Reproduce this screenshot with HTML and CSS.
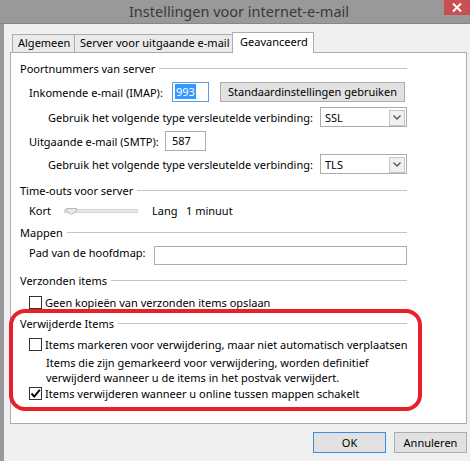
FILE: index.html
```html
<!DOCTYPE html>
<html>
<head>
<meta charset="utf-8">
<link rel="stylesheet" href="styles.css">
</head>
<body>
<div class="window">
  <div class="titlebar">
    <div class="title">Instellingen voor internet-e-mail</div>
    <div class="close">
      <svg width="10" height="9" viewBox="0 0 10 9"><path d="M1 0.5 L9 8.5 M9 0.5 L1 8.5" stroke="#fff" stroke-width="2"/></svg>
    </div>
  </div>
  <div class="frame">
    <div class="tabs">
      <div class="tab t1">Algemeen</div>
      <div class="tab t2">Server voor uitgaande e-mail</div>
      <div class="tab t3 active">Geavanceerd</div>
    </div>
    <div class="panel">
      <div class="group-head"><span>Poortnummers van server</span></div>
      <div class="row ind1 m4">
        <span class="lbl w-imap">Inkomende e-mail (IMAP):</span>
        <div class="input focus w-imapin"><span class="seltext">993</span></div>
        <button class="btn std">Standaardinstellingen gebruiken</button>
      </div>
      <div class="row ind2 m5">
        <span class="lbl w-enc">Gebruik het volgende type versleutelde verbinding:</span>
        <div class="select"><span class="val">SSL</span><span class="drop"><svg width="8" height="5" viewBox="0 0 8 5"><path d="M0.5 0.5 L4 4 L7.5 0.5" fill="none" stroke="#555" stroke-width="1.4"/></svg></span></div>
      </div>
      <div class="row ind1 m4">
        <span class="lbl w-smtp">Uitgaande e-mail (SMTP):</span>
        <div class="input w-smtpin">587</div>
      </div>
      <div class="row ind2 m3">
        <span class="lbl w-enc">Gebruik het volgende type versleutelde verbinding:</span>
        <div class="select"><span class="val">TLS</span><span class="drop"><svg width="8" height="5" viewBox="0 0 8 5"><path d="M0.5 0.5 L4 4 L7.5 0.5" fill="none" stroke="#555" stroke-width="1.4"/></svg></span></div>
      </div>

      <div class="group-head m6"><span>Time-outs voor server</span></div>
      <div class="row ind1">
        <span class="lbl w-kort">Kort</span>
        <div class="slider">
          <div class="track"></div>
          <svg class="thumb" width="11" height="7" viewBox="0 0 11 7"><path d="M0.5 0.5 H10.5 V3 L5.5 6.5 L0.5 3 Z" fill="#ececec" stroke="#b5b5b5"/></svg>
        </div>
        <span class="lbl w-lang">Lang</span>
        <span class="lbl">1 minuut</span>
      </div>

      <div class="group-head m2"><span>Mappen</span></div>
      <div class="row ind1 m3">
        <span class="lbl w-pad up">Pad van de hoofdmap:</span>
        <div class="input w-padin"></div>
      </div>

      <div class="group-head m5"><span>Verzonden items</span></div>
      <div class="row ind1 m2">
        <span class="cb"></span><span class="cblbl">Geen kopieën van verzonden items opslaan</span>
      </div>

      <div class="group-head m1"><span>Verwijderde Items</span></div>
      <div class="row ind1 m1">
        <span class="cb"></span><span class="cblbl">Items markeren voor verwijdering, maar niet automatisch verplaatsen</span>
      </div>
      <div class="desc">Items die zijn gemarkeerd voor verwijdering, worden definitief<br>verwijderd wanneer u de items in het postvak verwijdert.</div>
      <div class="row ind1 mneg">
        <span class="cb"><svg width="11" height="11" viewBox="0 0 11 11"><path d="M1.5 5.5 L4.2 8.5 L9.8 1.8" fill="none" stroke="#000" stroke-width="1.9"/></svg></span><span class="cblbl">Items verwijderen wanneer u online tussen mappen schakelt</span>
      </div>

      <div class="highlight"></div>
    </div>
    <div class="buttons">
      <button class="btn dlg ok">OK</button>
      <button class="btn dlg">Annuleren</button>
    </div>
  </div>
</div>
</body>
</html>
```

FILE: styles.css
```css
* { box-sizing: border-box; }
html, body { margin: 0; padding: 0; }
body {
  font-family: "Noto Sans", "Open Sans", sans-serif;
  font-size: 11px;
  color: #000;
  background: #f0f0f0;
}
.window {
  width: 470px;
  height: 461px;
  display: flex;
  flex-direction: column;
  overflow: hidden;
}
.titlebar {
  height: 24px;
  background: #999999;
  border-bottom: 1px solid #868686;
  display: grid;
  grid-template-columns: 1fr auto 1fr;
  padding-left: 8px;
}
.title {
  grid-column: 2;
  font-size: 14.5px;
  line-height: 22px;
  color: #3a3a3a;
}
.close {
  grid-column: 3;
  justify-self: end;
  width: 26px;
  height: 15px;
  background: #c75050;
  display: flex;
  align-items: center;
  justify-content: center;
}
.frame {
  flex: 1;
  border-left: 4px solid #999999;
  background: #f0f0f0;
  padding-top: 8px;
  display: flex;
  flex-direction: column;
}
.tabs {
  display: flex;
  align-items: flex-end;
  height: 20px;
  margin-left: 8px;
}
.tab {
  height: 18px;
  border: 1px solid #acacac;
  border-bottom: none;
  background: #eaeaea;
  line-height: 16px;
  padding-left: 5px;
  white-space: nowrap;
}
.t1 { width: 63px; }
.t2 { width: 159px; margin-left: -1px; }
.t3 { width: 82px; margin-left: -1px; }
.tab.active {
  height: 21px;
  margin-bottom: -1px;
  background: #fff;
  position: relative;
  z-index: 1;
  line-height: 18px;
  padding-left: 7px;
}
.panel {
  position: relative;
  margin-left: 6px;
  margin-right: 3px;
  height: 372px;
  background: #fff;
  border: 1px solid #acacac;
  padding: 5px 59px 0 9px;
}
.group-head {
  display: flex;
  align-items: center;
  height: 20px;
  white-space: nowrap;
}
.group-head::after {
  content: "";
  flex: 1;
  height: 1px;
  background: #c4c4c4;
  margin-left: 4px;
  margin-top: 1px;
}
.row {
  display: flex;
  align-items: center;
  height: 20px;
  white-space: nowrap;
}
.row > * { flex-shrink: 0; }
.ind1 { margin-left: 9px; }
.ind2 { margin-left: 28px; }
.m1 { margin-top: 1px; }
.m2 { margin-top: 2px; }
.m3 { margin-top: 3px; }
.m4 { margin-top: 4px; }
.m5 { margin-top: 5px; }
.m6 { margin-top: 6px; }
.mneg { margin-top: -2px; }
.lbl { display: inline-block; }
.up { padding-bottom: 5px; }
.w-imap { width: 143px; }
.w-smtp { width: 136px; }
.w-enc { width: 272px; }
.w-kort { width: 35px; }
.w-lang { width: 34px; }
.w-pad { width: 125px; }
.input {
  height: 20px;
  border: 1px solid #abadb3;
  background: #fff;
  padding-left: 5px;
  line-height: 18px;
}
.input.focus { border-color: #569de5; padding-left: 2px; }
.w-imapin { width: 37px; }
.w-smtpin { width: 41px; padding-left: 6px; }
.w-padin { width: 253px; height: 19px; margin-top: 1px; }
.seltext {
  background: #3399ff;
  color: #fff;
  display: inline-block;
  line-height: 15px;
  padding: 0 1px;
}
.btn {
  font-family: inherit;
  font-size: 11px;
  color: #000;
  background: #e1e1e1;
  border: 1px solid #adadad;
  height: 20px;
  padding: 0;
  margin: 0;
  line-height: 18px;
  text-align: center;
}
.std { width: 185px; margin-left: 11px; }
.select {
  width: 87px;
  height: 20px;
  border: 1px solid #acacac;
  background: #fff;
  display: flex;
  align-items: center;
  justify-content: space-between;
  padding: 0 1px 0 4px;
}
.drop {
  width: 16px;
  height: 16px;
  background: #f0f0f0;
  border: 1px solid #c6c6c6;
  display: flex;
  align-items: center;
  justify-content: center;
  margin-top: 1px;
}
.slider {
  width: 74px;
  height: 20px;
  position: relative;
  margin-right: 14px;
}
.track {
  position: absolute;
  left: 0;
  right: 0;
  top: 9px;
  height: 4px;
  background: #e7e7e7;
  border: 1px solid #d6d6d6;
}
.thumb {
  position: absolute;
  left: 2px;
  top: 8px;
}
.cb {
  width: 13px;
  height: 13px;
  border: 1px solid #333;
  background: #fff;
  display: flex;
  align-items: center;
  justify-content: center;
}
.cblbl { margin-left: 3px; }
.desc {
  margin-left: 26px;
  margin-top: 1px;
  line-height: 15px;
  height: 30px;
  white-space: nowrap;
}
.highlight {
  position: absolute;
  left: -2px;
  top: 256px;
  width: 413px;
  height: 102px;
  border: 4px solid #e8202a;
  border-radius: 16px;
  pointer-events: none;
}
.buttons {
  display: flex;
  justify-content: flex-end;
  gap: 8px;
  margin-top: 8px;
  padding-right: 3px;
}
.dlg { width: 73px; height: 21px; }
.ok { border-color: #3c8fe0; }
```
